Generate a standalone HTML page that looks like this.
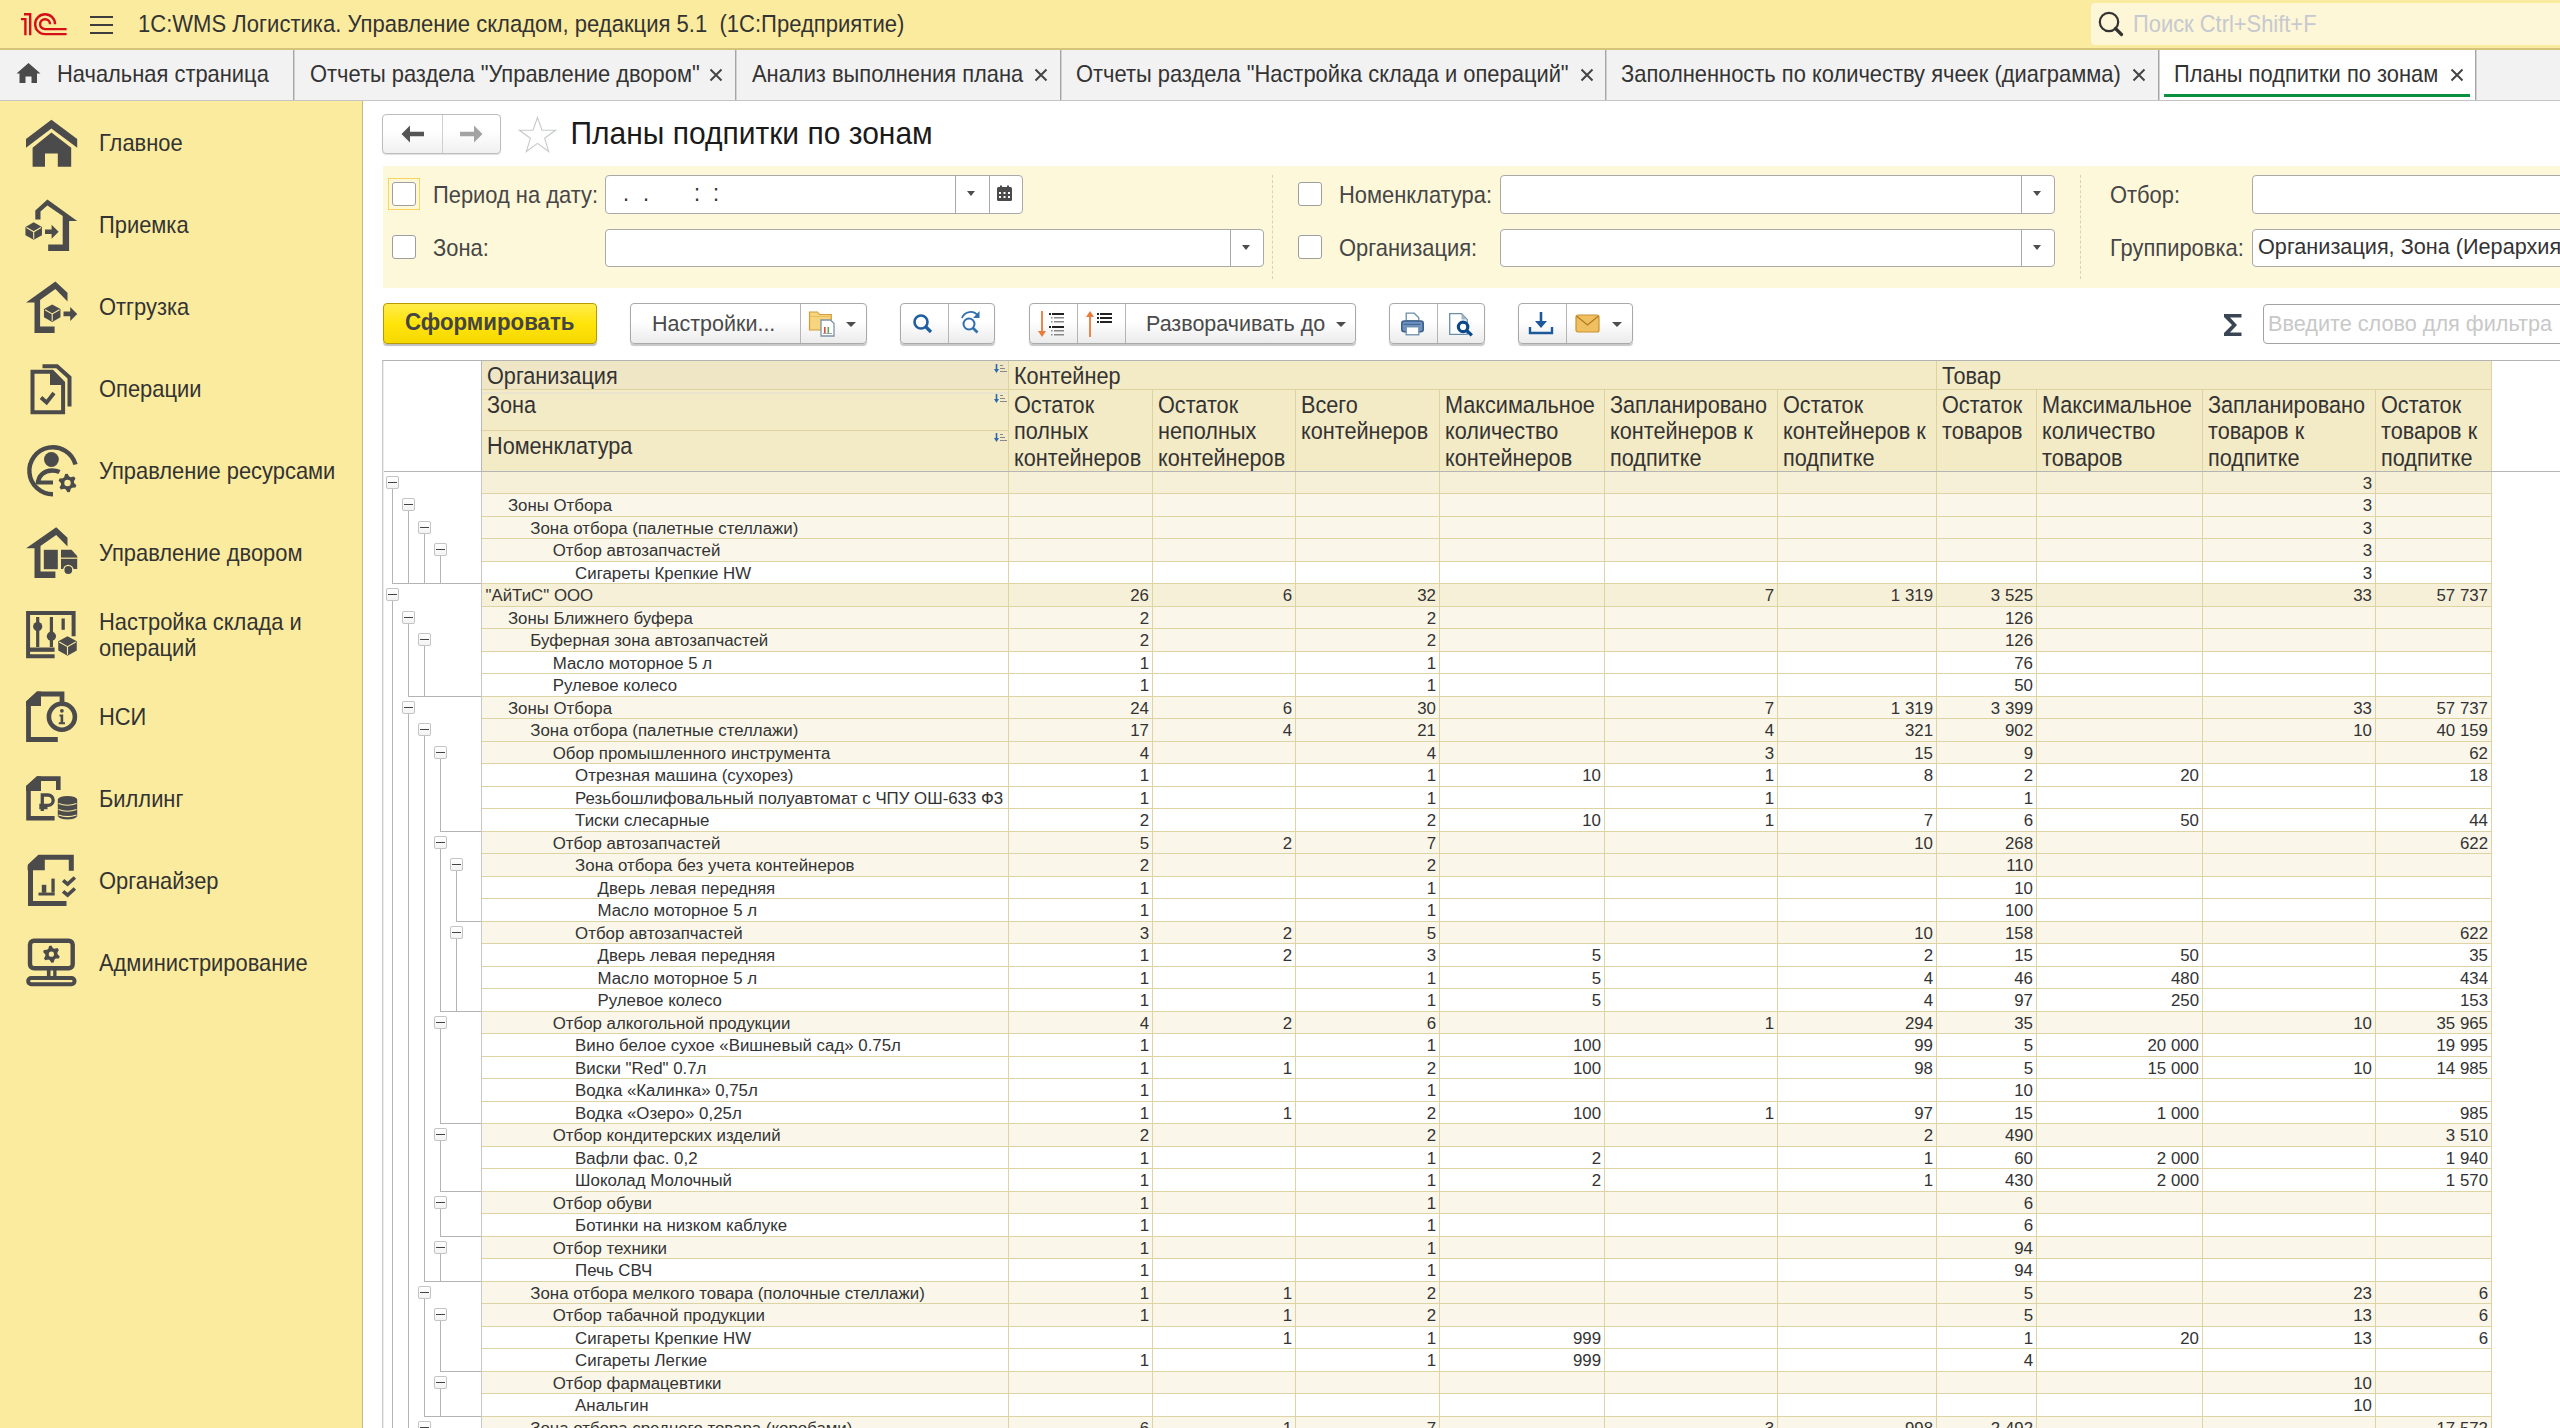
<!DOCTYPE html><html><head><meta charset="utf-8"><style>
*{box-sizing:border-box}
html,body{margin:0;padding:0;width:2560px;height:1428px;overflow:hidden;background:#fff;font-family:"Liberation Sans",sans-serif;color:#333}
.a{position:absolute}
.t{position:absolute;white-space:pre;line-height:1;transform:scaleY(1.05);transform-origin:0 0.8465em}
.t.ht{transform:scaleY(1.065);transform-origin:0 20.66px}
#top{left:0;top:0;width:2560px;height:48px;background:#fbeb9e;border-bottom:0}
#topline{left:0;top:48px;width:2560px;height:2px;background:#d6c37a}
#tabs{left:0;top:50px;width:2560px;height:50px;background:#f2f2f2}
#tabline{left:0;top:100px;width:2560px;height:1px;background:#c4c4c4}
.tsep{position:absolute;top:50px;width:2px;height:50px;background:linear-gradient(to right,#a5a5a5 50%,#d2d2d2 50%)}
.tab{font-size:21.9px;color:#333}
.x{font-size:21px;color:#444}
#side{left:0;top:101px;width:362px;height:1327px;background:#fbeb9e}
#sideline{left:362px;top:101px;width:1px;height:1327px;background:#c8b978}
.st{font-size:21.9px;color:#333}
.ui{font-size:21.9px;color:#464646}
.btn{position:absolute;border:1px solid #a9a9a9;border-radius:4px;background:linear-gradient(#fff,#fff 45%,#ebebeb);box-shadow:0 1.5px 1px rgba(0,0,0,.22)}
.dv{position:absolute;top:0;width:1px;height:100%;background:#b5b5b5}
.fld{position:absolute;border:1px solid #a9a9a9;border-radius:4px;background:#fff}
.cb{position:absolute;width:24px;height:24px;border:1.5px solid #9e9e9e;border-radius:3px;background:#fff}
.dd{position:absolute;width:0;height:0;border-left:4px solid transparent;border-right:4px solid transparent;border-top:5px solid #4d4d4d}
.hd{position:absolute;background:#f3eac6}
.hl{position:absolute;background:#ddd2a0}
.ht{font-size:21.67px;color:#333;line-height:26.3px}
.r{position:absolute;left:481px;width:2010px;height:22.5px}
.c{position:absolute;font-size:16.85px;color:#333;white-space:pre;line-height:1}
.gl{position:absolute;background:#ddd3a3}
.tl{position:absolute;background:#b4b4b4}
.box{position:absolute;width:13px;height:13px;border:1px solid #c4c4c4;border-radius:2px;background:linear-gradient(#fff,#f3f3f3);box-shadow:0 0 0.5px #ddd}
.box:after{content:"";position:absolute;left:1px;top:5px;width:9px;height:1px;background:#444}
</style></head><body><div id="top" class="a"></div><div id="topline" class="a"></div><svg class="a" style="left:0;top:0" width="80" height="48" viewBox="0 0 80 48"><g fill="none" stroke="#d50f1a" stroke-width="2.4">
<path d="M21,19.1 H25.4 V35.2 M24,14.3 H30.2 V35.2"/>
<path d="M55.05,23.6 V24.2 A9.95,9.95 0 1 0 45.1,34.15 H66.6"/>
<path d="M50,23.4 V24.2 A4.95,4.95 0 1 0 45.05,29.15 H66.6"/>
</g></svg><div class="a" style="left:90px;top:16px;width:23px;height:2px;background:#3d3d3d"></div><div class="a" style="left:90px;top:24px;width:23px;height:2px;background:#3d3d3d"></div><div class="a" style="left:90px;top:32px;width:23px;height:2px;background:#3d3d3d"></div><div class="t ui" style="left:138px;top:14px;font-size:22.05px;color:#333">1С:WMS Логистика. Управление складом, редакция 5.1  (1С:Предприятие)</div><div class="a" style="left:2091px;top:3px;width:480px;height:42px;background:#fdf6d7;border-radius:4px"></div><svg class="a" style="left:2097px;top:10px" width="28" height="28" viewBox="0 0 28 28"><circle cx="12" cy="12" r="9.2" fill="none" stroke="#333" stroke-width="2.2"/><path d="M18.5 18.5 L24.5 24.5" stroke="#333" stroke-width="3.2" stroke-linecap="round"/></svg><div class="t " style="left:2133px;top:14px;font-size:21.9px;color:#c6c9cf">Поиск Ctrl+Shift+F</div><div id="tabs" class="a"></div><div class="a" style="left:2159px;top:50px;width:316px;height:50px;background:#fff"></div><div id="tabline" class="a"></div><div class="tsep" style="left:293px"></div><div class="tsep" style="left:735px"></div><div class="tsep" style="left:1060px"></div><div class="tsep" style="left:1605px"></div><div class="tsep" style="left:2158px"></div><div class="tsep" style="left:2475px"></div><div class="a" style="left:2164px;top:94px;width:306px;height:3px;background:#0a913f"></div><svg class="a" style="left:16px;top:63px" width="25" height="21" viewBox="0 0 25 21"><path d="M12.5 0 L24.5 10.5 H21 V20 H15.5 V13.5 H9.5 V20 H3.5 V10.5 H0.5 Z" fill="#4a4a4a"/></svg><div class="t tab" style="left:57px;top:64px;">Начальная страница</div><div class="t tab" style="left:310px;top:64px;">Отчеты раздела &quot;Управление двором&quot;</div><svg class="a" style="left:709px;top:68px" width="14" height="14" viewBox="0 0 14 14"><path d="M1.5 1.5 L12.5 12.5 M12.5 1.5 L1.5 12.5" stroke="#444" stroke-width="2"/></svg><div class="t tab" style="left:752px;top:64px;">Анализ выполнения плана</div><svg class="a" style="left:1034px;top:68px" width="14" height="14" viewBox="0 0 14 14"><path d="M1.5 1.5 L12.5 12.5 M12.5 1.5 L1.5 12.5" stroke="#444" stroke-width="2"/></svg><div class="t tab" style="left:1076px;top:64px;">Отчеты раздела &quot;Настройка склада и операций&quot;</div><svg class="a" style="left:1580px;top:68px" width="14" height="14" viewBox="0 0 14 14"><path d="M1.5 1.5 L12.5 12.5 M12.5 1.5 L1.5 12.5" stroke="#444" stroke-width="2"/></svg><div class="t tab" style="left:1621px;top:64px;">Заполненность по количеству ячеек (диаграмма)</div><svg class="a" style="left:2132px;top:68px" width="14" height="14" viewBox="0 0 14 14"><path d="M1.5 1.5 L12.5 12.5 M12.5 1.5 L1.5 12.5" stroke="#444" stroke-width="2"/></svg><div class="t tab" style="left:2174px;top:64px;">Планы подпитки по зонам</div><svg class="a" style="left:2450px;top:68px" width="14" height="14" viewBox="0 0 14 14"><path d="M1.5 1.5 L12.5 12.5 M12.5 1.5 L1.5 12.5" stroke="#444" stroke-width="2"/></svg><div id="side" class="a"></div><div id="sideline" class="a"></div><div class="t st" style="left:99px;top:133px;">Главное</div><div class="t st" style="left:99px;top:215px;">Приемка</div><div class="t st" style="left:99px;top:297px;">Отгрузка</div><div class="t st" style="left:99px;top:379px;">Операции</div><div class="t st" style="left:99px;top:461px;">Управление ресурсами</div><div class="t st" style="left:99px;top:543px;">Управление двором</div><div class="t st" style="left:99px;top:612px;">Настройка склада и</div><div class="t st" style="left:99px;top:637.5px;">операций</div><div class="t st" style="left:99px;top:707px;">НСИ</div><div class="t st" style="left:99px;top:789px;">Биллинг</div><div class="t st" style="left:99px;top:871px;">Органайзер</div><div class="t st" style="left:99px;top:953px;">Администрирование</div><svg class="a" style="left:0;top:0" width="362" height="1000" viewBox="0 0 362 1000"><path d="M26,139 L51.4,119.7 L77.2,139 V147.8 L51.4,128.5 L26,147.8 Z" fill="#4b4b4b"/><path d="M32.6,147.8 L51.4,132.5 L71.2,147.8 V166.7 H57.8 V153.5 H45 V166.7 H32.6 Z" fill="#4b4b4b"/><path d="M35.3,219.5 V210.6 L47.4,199.4 L77.2,221 H69.1 V250.9 H48.2 V244.5 H62.7 V216 L47.4,205.5 L40.5,211.5 V219.5 Z" fill="#4b4b4b"/><path d="M25.450000000000003,226.98 L33.7,222.35999999999999 L41.95,226.98 V235.23 L33.7,239.85 L25.450000000000003,235.23 Z" fill="#4b4b4b"/><path d="M26.450000000000003,227.57999999999998 L33.7,231.79999999999998 L40.95,227.57999999999998 M33.7,231.79999999999998 V238.85" stroke="#fbeb9e" stroke-width="1.1" fill="none"/><path d="M45,229.5 H51.6 V224.8 L58.6,231.8 L51.6,238.8 V234.10000000000002 H45 Z" fill="#4b4b4b"/><path d="M26.1,302.4 L55.4,281.5 L67.5,292.8 V301.6 L55.4,289 L40.1,300 V326.6 H54.6 V333 H34.5 V302.4 Z" fill="#4b4b4b"/><path d="M43.95,309.08 L52.2,304.46 L60.45,309.08 V317.33 L52.2,321.95 L43.95,317.33 Z" fill="#4b4b4b"/><path d="M44.95,309.68 L52.2,313.9 L59.45,309.68 M52.2,313.9 V320.95" stroke="#fbeb9e" stroke-width="1.1" fill="none"/><path d="M63.5,311.59999999999997 H70.2 V306.9 L77.2,313.9 L70.2,320.9 V316.2 H63.5 Z" fill="#4b4b4b"/><path d="M32.5,371.8 H52 L63.1,383 V412.3 H32.5 Z" fill="none" stroke="#4b4b4b" stroke-width="4"/><path d="M50,370 H53 L65,382 V385 H50 Z" fill="#4b4b4b"/><path d="M41,397.5 L46.6,402.5 L54,393" fill="none" stroke="#4b4b4b" stroke-width="3.8"/><path d="M42.5,366.3 H57 L69.5,377.5 V406.5" fill="none" stroke="#4b4b4b" stroke-width="4"/><path d="M75.5,464.5 A23.5 23.5 0 1 0 53,494.3" fill="none" stroke="#4b4b4b" stroke-width="4.4"/><circle cx="51.4" cy="459.5" r="7.4" fill="#4b4b4b"/><path d="M38,484 C38,475 45,470.5 52,470.5 C55.5,470.5 57.5,471 59.5,472" fill="none" stroke="#4b4b4b" stroke-width="4.6"/><path d="M36.5,482.5 H53" stroke="#4b4b4b" stroke-width="4"/><path d="M76.39,485.37 L75.48,487.59 L72.19,487.68 L70.82,488.73 L69.90,491.88 L67.52,492.20 L65.80,489.40 L64.20,488.74 L61.01,489.52 L59.54,487.61 L61.10,484.73 L60.88,483.01 L58.61,480.63 L59.52,478.41 L62.81,478.32 L64.18,477.27 L65.10,474.12 L67.48,473.80 L69.20,476.60 L70.80,477.26 L73.99,476.48 L75.46,478.39 L73.90,481.27 L74.12,482.99 Z" fill="#4b4b4b"/><circle cx="67.5" cy="483" r="3.2" fill="#fbeb9e"/><path d="M26.1,548.2 L56.2,527.3 L67.5,537.8 V546.6 L56.2,535 L40.5,546 V571.5 H55.4 V578 H34.5 V548.2 Z" fill="#4b4b4b"/><rect x="43.8" y="549.8" width="14" height="19.4" fill="#4b4b4b"/><path d="M61,549.8 H71.5 L77.2,556 V569 H61 Z" fill="#4b4b4b"/><path d="M61,558.2 H77.2" stroke="#fbeb9e" stroke-width="1.2"/><circle cx="68.3" cy="570" r="4.6" fill="#4b4b4b" stroke="#fbeb9e" stroke-width="1.4"/><path d="M54.6,656.3 H28.1 V613 H73.6 V636.2" fill="none" stroke="#4b4b4b" stroke-width="4"/><rect x="30" y="647.5" width="24.6" height="4.3" fill="#4b4b4b"/><rect x="36.1" y="617" width="3.2" height="30" fill="#4b4b4b"/><circle cx="37.7" cy="626.6" r="4.6" fill="#4b4b4b"/><rect x="49.8" y="617" width="3.2" height="30" fill="#4b4b4b"/><circle cx="51.4" cy="636.2" r="4.6" fill="#4b4b4b"/><rect x="61.5" y="618.5" width="3.3" height="11.3" fill="#4b4b4b"/><path d="M58.25,641.32 L67.5,636.14 L76.75,641.32 V650.57 L67.5,655.75 L58.25,650.57 Z" fill="#4b4b4b"/><path d="M59.25,641.9200000000001 L67.5,646.7 L75.75,641.9200000000001 M67.5,646.7 V654.75" stroke="#fbeb9e" stroke-width="1.1" fill="none"/><path d="M62,704 V694 H38 L28.5,702.5 V739.5 H57.8" fill="none" stroke="#4b4b4b" stroke-width="4.8"/><path d="M26.1,701.5 L36.9,691.5 H41 V706 H26.1 Z" fill="#4b4b4b"/><circle cx="61.9" cy="716.7" r="13" fill="#fbeb9e" stroke="#4b4b4b" stroke-width="4.6"/><circle cx="61.9" cy="710.8" r="1.9" fill="#4b4b4b"/><path d="M59.5,714.6 H63.2 V722.3 H65 V724.2 H58.8 V722.3 H60.6 V716.4 H59.5 Z" fill="#4b4b4b"/><path d="M58.3,790 V778.6 H38 L28.5,787 V818.3 H54.6" fill="none" stroke="#4b4b4b" stroke-width="4.6"/><path d="M26.1,786 L36.9,776.3 H41 V791 H26.1 Z" fill="#4b4b4b"/><path d="M42.3,811 V795 H48 A5.2 5.2 0 0 1 48,805.4 H39.3 M39.3,807.5 H47.5" fill="none" stroke="#4b4b4b" stroke-width="3.3"/><ellipse cx="67.5" cy="799.5" rx="9.7" ry="3.6" fill="#4b4b4b" stroke="#fbeb9e" stroke-width="0"/><ellipse cx="67.5" cy="805.5" rx="9.7" ry="3.6" fill="#4b4b4b" stroke="#fbeb9e" stroke-width="1.1"/><ellipse cx="67.5" cy="811.5" rx="9.7" ry="3.6" fill="#4b4b4b" stroke="#fbeb9e" stroke-width="1.1"/><ellipse cx="67.5" cy="816.5" rx="9.7" ry="3.6" fill="#4b4b4b" stroke="#fbeb9e" stroke-width="1.1"/><rect x="57.8" y="799.5" width="19.4" height="17" fill="#4b4b4b"/><path d="M58.5,803.6 Q67.5,806.8000000000001 76.5,803.6" stroke="#fbeb9e" stroke-width="1.1" fill="none"/><path d="M58.5,809.6 Q67.5,812.8000000000001 76.5,809.6" stroke="#fbeb9e" stroke-width="1.1" fill="none"/><path d="M58.5,815 Q67.5,818.2 76.5,815" stroke="#fbeb9e" stroke-width="1.1" fill="none"/><path d="M71.3,870.8 V857.3 H39.5 L30.5,865.5 V903.5 H66.5" fill="none" stroke="#4b4b4b" stroke-width="5"/><path d="M27.6,865.5 L38.5,855.1 H44.8 V870.2 H27.6 Z" fill="#4b4b4b"/><rect x="38.5" y="892.6" width="16.2" height="2.9" fill="#4b4b4b"/><rect x="41.8" y="884.8" width="4.5" height="8" fill="#4b4b4b"/><rect x="51.4" y="878.6" width="3.3" height="14" fill="#4b4b4b"/><path d="M63.1,880.3 L67.6,884.2 L74.9,877.5 M63.1,891.3 L67.6,895.2 L74.9,888.5" fill="none" stroke="#4b4b4b" stroke-width="3.6"/><rect x="30" y="940.7" width="42.7" height="27.6" rx="4" fill="none" stroke="#4b4b4b" stroke-width="4.4"/><path d="M59.71,956.41 L58.86,958.49 L55.79,958.57 L54.51,959.56 L53.64,962.50 L51.42,962.80 L49.81,960.18 L48.31,959.57 L45.33,960.29 L43.96,958.51 L45.42,955.81 L45.21,954.21 L43.09,951.99 L43.94,949.91 L47.01,949.83 L48.29,948.84 L49.16,945.90 L51.38,945.60 L52.99,948.22 L54.49,948.83 L57.47,948.11 L58.84,949.89 L57.38,952.59 L57.59,954.19 Z" fill="#4b4b4b"/><circle cx="51.4" cy="954.2" r="2.6" fill="#fbeb9e"/><rect x="46.9" y="969" width="3.6" height="8" fill="#4b4b4b"/><rect x="53.2" y="969" width="3.3" height="8" fill="#4b4b4b"/><rect x="28.2" y="978" width="46.3" height="6.2" rx="3" fill="none" stroke="#4b4b4b" stroke-width="4"/></svg><div class="btn" style="left:382px;top:114px;width:119px;height:40px;border-color:#bdbdbd;background:linear-gradient(#fff,#fff 40%,#f0f0f0);box-shadow:0 1px 1px rgba(0,0,0,.12)"><div class="dv" style="left:59px;background:#cfcfcf"></div></div><svg class="a" style="left:401px;top:125px" width="24" height="18" viewBox="0 0 24 18"><path d="M0.5 9 L9 0.5 V6.8 H23 V11.2 H9 V17.5 Z" fill="#555"/></svg><svg class="a" style="left:459px;top:125px" width="24" height="18" viewBox="0 0 24 18"><path d="M23.5 9 L15 0.5 V6.8 H1 V11.2 H15 V17.5 Z" fill="#a3a3a3"/></svg><svg class="a" style="left:518px;top:116px" width="39" height="37" viewBox="0 0 39 37"><path d="M19.5 1.5 L24 14.3 H37.5 L26.6 22.3 L30.7 35.5 L19.5 27.4 L8.3 35.5 L12.4 22.3 L1.5 14.3 H15 Z" fill="none" stroke="#c6c9cc" stroke-width="1.1" stroke-linejoin="miter"/></svg><div class="t " style="left:570.5px;top:119px;font-size:30px;color:#1a1a1a">Планы подпитки по зонам</div><div class="a" style="left:383px;top:166px;width:2177px;height:122px;background:#fef8da"></div><div class="a" style="left:388px;top:178px;width:32px;height:32px;border:1px solid #f8d45c"></div><div class="cb" style="left:392px;top:182px"></div><div class="cb" style="left:392px;top:235px"></div><div class="t ui" style="left:433px;top:185px;">Период на дату:</div><div class="t ui" style="left:433px;top:238px;">Зона:</div><div class="fld" style="left:605px;top:175px;width:418px;height:39px"><div class="dv" style="left:349px;background:#a9a9a9"></div><div class="dv" style="left:383px;background:#a9a9a9"></div></div><div class="t " style="left:623px;top:183px;font-size:21.9px;color:#333">.</div><div class="t " style="left:643px;top:183px;font-size:21.9px;color:#333">.</div><div class="t " style="left:694px;top:183px;font-size:21.9px;color:#333">:</div><div class="t " style="left:713px;top:183px;font-size:21.9px;color:#333">:</div><div class="dd" style="left:967px;top:191px"></div><svg class="a" style="left:995px;top:184px" width="20" height="20" viewBox="0 0 20 20"><rect x="2" y="3" width="15" height="14" rx="1.5" fill="#4a4a4a"/><rect x="5" y="1.5" width="2" height="4" fill="#4a4a4a"/><rect x="12" y="1.5" width="2" height="4" fill="#4a4a4a"/><g fill="#fff"><rect x="4" y="8" width="2" height="2"/><rect x="8.5" y="8" width="2" height="2"/><rect x="13" y="8" width="2" height="2"/><rect x="4" y="12" width="2" height="2"/><rect x="8.5" y="12" width="2" height="2"/><rect x="13" y="12" width="2" height="2"/></g></svg><div class="fld" style="left:605px;top:229px;width:659px;height:38px"><div class="dv" style="left:624px;background:#a9a9a9"></div></div><div class="dd" style="left:1242px;top:245px"></div><div class="a" style="left:1272px;top:175px;width:0;height:104px;border-left:1px dashed #d8d2b8"></div><div class="cb" style="left:1298px;top:182px"></div><div class="cb" style="left:1298px;top:235px"></div><div class="t ui" style="left:1339px;top:185px;">Номенклатура:</div><div class="t ui" style="left:1339px;top:238px;">Организация:</div><div class="fld" style="left:1500px;top:175px;width:555px;height:39px"><div class="dv" style="left:520px;background:#a9a9a9"></div></div><div class="dd" style="left:2033px;top:191px"></div><div class="fld" style="left:1500px;top:229px;width:555px;height:38px"><div class="dv" style="left:520px;background:#a9a9a9"></div></div><div class="dd" style="left:2033px;top:245px"></div><div class="a" style="left:2080px;top:175px;width:0;height:104px;border-left:1px dashed #d8d2b8"></div><div class="t ui" style="left:2110px;top:185px;">Отбор:</div><div class="t ui" style="left:2110px;top:238px;">Группировка:</div><div class="fld" style="left:2252px;top:175px;width:400px;height:39px"></div><div class="fld" style="left:2252px;top:229px;width:400px;height:38px"></div><div class="t " style="left:2258px;top:236px;font-size:21.67px;color:#333">Организация, Зона (Иерархия), Номенклатура</div><div class="a" style="left:383px;top:303px;width:214px;height:41px;border:1px solid #b59b00;border-radius:4px;background:linear-gradient(#ffec4a,#ffe40a 50%,#f5d800);box-shadow:0 1.5px 1px rgba(0,0,0,.25)"></div><div class="t " style="left:405px;top:312px;font-size:22.25px;font-weight:bold;color:#444">Сформировать</div><div class="btn" style="left:630px;top:303px;width:237px;height:41px"><div class="dv" style="left:169px"></div></div><div class="t ui" style="left:652px;top:314px;font-size:21.5px;color:#4a4a4a">Настройки...</div><svg class="a" style="left:808px;top:310px" width="30" height="28" viewBox="0 0 30 28"><path d="M1.5,4.5 V2 H9.5 L11.5,4.5 H23.3 V20 H1.5 Z" fill="#f6d57e" stroke="#d49b3c" stroke-width="1.2"/><path d="M1.5,6.5 H23.3" stroke="#e8bd5c" stroke-width="1"/><path d="M13,10 H22.5 L26,13.5 V26 H13 Z" fill="#fff" stroke="#7f93a6" stroke-width="1.3"/><rect x="16" y="17" width="1.6" height="6" fill="#e0463a"/><rect x="19.5" y="17" width="1.6" height="6" fill="#58a85a"/><rect x="15" y="23" width="9" height="1" fill="#9aa"/></svg><div class="dd" style="left:846px;top:322px;border-left-width:5px;border-right-width:5px;border-top-width:5px"></div><div class="btn" style="left:900px;top:303px;width:95px;height:41px"><div class="dv" style="left:47px"></div></div><svg class="a" style="left:911px;top:312px" width="24" height="24" viewBox="0 0 24 24"><circle cx="10" cy="10" r="6.5" fill="none" stroke="#1f5f9f" stroke-width="2.6"/><path d="M14.5 14.5 L20 20" stroke="#1f5f9f" stroke-width="3.2"/></svg><svg class="a" style="left:958px;top:308px" width="26" height="28" viewBox="0 0 26 28"><circle cx="11" cy="16" r="5.5" fill="none" stroke="#2f6faf" stroke-width="2"/><path d="M15 20 L19.5 24.5" stroke="#2f6faf" stroke-width="2.6"/><path d="M4 10 A9 9 0 0 1 20 8" fill="none" stroke="#2f6faf" stroke-width="1.8"/><path d="M21.5 3 V10 H15 Z" fill="#2f6faf"/></svg><div class="btn" style="left:1029px;top:303px;width:327px;height:41px"><div class="dv" style="left:47px"></div><div class="dv" style="left:95px"></div></div><svg class="a" style="left:1037px;top:310px" width="30" height="30" viewBox="0 0 30 30"><path d="M5 1 V25" stroke="#ea7a3a" stroke-width="1.8"/><path d="M1 21 L5 27 L9 21 Z" fill="#ea7a3a"/><g fill="#222"><rect x="12" y="3" width="2" height="2"/><rect x="15" y="3" width="12" height="2"/><rect x="12" y="16" width="2" height="2"/><rect x="15" y="16" width="12" height="2"/></g><g fill="#888"><rect x="14" y="7" width="1.5" height="1.5"/><rect x="17" y="7" width="10" height="1.5"/><rect x="14" y="11" width="1.5" height="1.5"/><rect x="17" y="11" width="10" height="1.5"/><rect x="14" y="20" width="1.5" height="1.5"/><rect x="17" y="20" width="10" height="1.5"/><rect x="14" y="24" width="1.5" height="1.5"/><rect x="17" y="24" width="10" height="1.5"/></g></svg><svg class="a" style="left:1085px;top:310px" width="30" height="30" viewBox="0 0 30 30"><path d="M5 27 V4" stroke="#ea7a3a" stroke-width="1.8"/><path d="M1 7 L5 1 L9 7 Z" fill="#ea7a3a"/><g fill="#222"><rect x="12" y="3" width="2" height="2"/><rect x="15" y="3" width="12" height="2"/><rect x="12" y="7" width="2" height="2"/><rect x="15" y="7" width="12" height="2"/><rect x="12" y="11" width="2" height="2"/><rect x="15" y="11" width="12" height="2"/></g></svg><div class="t ui" style="left:1146px;top:314px;font-size:21.5px;color:#4a4a4a">Разворачивать до</div><div class="dd" style="left:1336px;top:322px;border-left-width:5px;border-right-width:5px;border-top-width:5px"></div><div class="btn" style="left:1389px;top:303px;width:96px;height:41px"><div class="dv" style="left:47px"></div></div><svg class="a" style="left:1399px;top:311px" width="26" height="26" viewBox="0 0 26 26"><path d="M7.2 2.2 H15.2 L19.8 6.7 V10 H7.2 Z" fill="#fff" stroke="#6b8eaa" stroke-width="1.3"/><rect x="2.8" y="10" width="21.4" height="10.8" rx="2.5" fill="#6d92c3" stroke="#3e5f86" stroke-width="1.6"/><path d="M4.6 13.3 H21.6" stroke="#3e5f86" stroke-width="1"/><rect x="7.2" y="15.8" width="12.6" height="8" fill="#fff" stroke="#6b8eaa" stroke-width="1.3"/></svg><svg class="a" style="left:1448px;top:310px" width="28" height="28" viewBox="0 0 28 28"><path d="M1.7 3.7 H13.5 L19.2 9.4 V24.3 H1.7 Z" fill="#fff" stroke="#6a8fab" stroke-width="1.3"/><path d="M13.5 3.7 V9.4 H19.2" fill="#9fb4c4"/><circle cx="15.1" cy="16.9" r="4.7" fill="#fff" stroke="#0b4a88" stroke-width="3.2"/><path d="M18.3 20.1 L23.8 25.4" stroke="#0b4a88" stroke-width="3.4"/></svg><div class="btn" style="left:1518px;top:303px;width:115px;height:41px"><div class="dv" style="left:47px"></div></div><svg class="a" style="left:1528px;top:311px" width="26" height="26" viewBox="0 0 26 26"><path d="M13 1 V15" stroke="#1a5a9a" stroke-width="2.6"/><path d="M7 10 L13 17 L19 10 Z" fill="#1a5a9a"/><path d="M2 16 V22 H24 V16" fill="none" stroke="#1a5a9a" stroke-width="2.4"/></svg><svg class="a" style="left:1575px;top:314px" width="26" height="20" viewBox="0 0 26 20"><rect x="1" y="1" width="23" height="17" rx="2" fill="#f0c060" stroke="#c99030" stroke-width="1.2"/><path d="M1.5 2 L12.5 11 L23.5 2" fill="none" stroke="#b07a20" stroke-width="1.3"/></svg><div class="dd" style="left:1612px;top:322px;border-left-width:5px;border-right-width:5px;border-top-width:5px"></div><svg class="a" style="left:2223px;top:313px" width="20" height="24" viewBox="0 0 20 24"><path d="M1 1 H18.5 V4.5 H7 L14 12 L7 19.5 H18.5 V23 H1 V20 L9 12 L1 4 Z" fill="#3a4656"/></svg><div class="fld" style="left:2263px;top:304px;width:400px;height:40px;border-color:#a3a3a3"></div><div class="t " style="left:2268px;top:313px;font-size:21.67px;color:#c8c8c8">Введите слово для фильтра</div><div class="a" style="left:382px;top:360px;width:2178px;height:1px;background:#b3b3b3"></div><div class="hd" style="left:481px;top:361px;width:527.4px;height:28.5px;background:#efe6c6"></div><div class="hd" style="left:1008.4px;top:361px;width:1482.85px;height:110.5px"></div><div class="hd" style="left:481px;top:389.5px;width:527.4px;height:82px"></div><div class="hl" style="left:481px;top:389px;width:2010.25px;height:1px"></div><div class="hl" style="left:481px;top:430px;width:527.4px;height:1px"></div><div class="a" style="left:482px;top:392px;width:526px;height:2px;background:#ebe5cf"></div><div class="hl" style="left:1008px;top:361px;width:1px;height:110.5px"></div><div class="hl" style="left:1152px;top:389.5px;width:1px;height:82px"></div><div class="hl" style="left:1295px;top:389.5px;width:1px;height:82px"></div><div class="hl" style="left:1439px;top:389.5px;width:1px;height:82px"></div><div class="hl" style="left:1604px;top:389.5px;width:1px;height:82px"></div><div class="hl" style="left:1777px;top:389.5px;width:1px;height:82px"></div><div class="hl" style="left:1936px;top:361px;width:1px;height:110.5px"></div><div class="hl" style="left:2036px;top:389.5px;width:1px;height:82px"></div><div class="hl" style="left:2202px;top:389.5px;width:1px;height:82px"></div><div class="hl" style="left:2375px;top:389.5px;width:1px;height:82px"></div><div class="hl" style="left:2491px;top:361px;width:1px;height:110.5px"></div><div class="a" style="left:481px;top:361px;width:1px;height:110.5px;background:#b8b8b8"></div><div class="a" style="left:383px;top:471px;width:2177px;height:1px;background:#b5b5b5"></div><div class="a" style="left:382px;top:360px;width:1px;height:1068px;background:#c9c9c9"></div><div class="a" style="left:383px;top:361px;width:1px;height:1067px;background:#ededed"></div><div class="t ht" style="left:487px;top:364px;">Организация</div><div class="t ht" style="left:487px;top:393px;">Зона</div><div class="t ht" style="left:487px;top:434px;">Номенклатура</div><div class="t ht" style="left:1014px;top:364px;">Контейнер</div><div class="t ht" style="left:1942px;top:364px;">Товар</div><div class="t ht" style="left:1014px;top:393.00px">Остаток</div><div class="t ht" style="left:1014px;top:419.30px">полных</div><div class="t ht" style="left:1014px;top:445.60px">контейнеров</div><div class="t ht" style="left:1158px;top:393.00px">Остаток</div><div class="t ht" style="left:1158px;top:419.30px">неполных</div><div class="t ht" style="left:1158px;top:445.60px">контейнеров</div><div class="t ht" style="left:1301px;top:393.00px">Всего</div><div class="t ht" style="left:1301px;top:419.30px">контейнеров</div><div class="t ht" style="left:1445px;top:393.00px">Максимальное</div><div class="t ht" style="left:1445px;top:419.30px">количество</div><div class="t ht" style="left:1445px;top:445.60px">контейнеров</div><div class="t ht" style="left:1610px;top:393.00px">Запланировано</div><div class="t ht" style="left:1610px;top:419.30px">контейнеров к</div><div class="t ht" style="left:1610px;top:445.60px">подпитке</div><div class="t ht" style="left:1783px;top:393.00px">Остаток</div><div class="t ht" style="left:1783px;top:419.30px">контейнеров к</div><div class="t ht" style="left:1783px;top:445.60px">подпитке</div><div class="t ht" style="left:1942px;top:393.00px">Остаток</div><div class="t ht" style="left:1942px;top:419.30px">товаров</div><div class="t ht" style="left:2042px;top:393.00px">Максимальное</div><div class="t ht" style="left:2042px;top:419.30px">количество</div><div class="t ht" style="left:2042px;top:445.60px">товаров</div><div class="t ht" style="left:2208px;top:393.00px">Запланировано</div><div class="t ht" style="left:2208px;top:419.30px">товаров к</div><div class="t ht" style="left:2208px;top:445.60px">подпитке</div><div class="t ht" style="left:2381px;top:393.00px">Остаток</div><div class="t ht" style="left:2381px;top:419.30px">товаров к</div><div class="t ht" style="left:2381px;top:445.60px">подпитке</div><svg class="a" style="left:994px;top:364px" width="13" height="10" viewBox="0 0 13 10"><path d="M2.5 0 V7" stroke="#2a6ab0" stroke-width="1.6"/><path d="M0 5 L2.5 9 L5 5Z" fill="#2a6ab0"/><g fill="#888"><rect x="6" y="1" width="3" height="1"/><rect x="6" y="4" width="5" height="1"/><rect x="6" y="7" width="7" height="1"/></g></svg><svg class="a" style="left:994px;top:394px" width="13" height="10" viewBox="0 0 13 10"><path d="M2.5 0 V7" stroke="#2a6ab0" stroke-width="1.6"/><path d="M0 5 L2.5 9 L5 5Z" fill="#2a6ab0"/><g fill="#888"><rect x="6" y="1" width="3" height="1"/><rect x="6" y="4" width="5" height="1"/><rect x="6" y="7" width="7" height="1"/></g></svg><svg class="a" style="left:994px;top:433px" width="13" height="10" viewBox="0 0 13 10"><path d="M2.5 0 V7" stroke="#2a6ab0" stroke-width="1.6"/><path d="M0 5 L2.5 9 L5 5Z" fill="#2a6ab0"/><g fill="#888"><rect x="6" y="1" width="3" height="1"/><rect x="6" y="4" width="5" height="1"/><rect x="6" y="7" width="7" height="1"/></g></svg><div class="r" style="top:472px;height:21px;background:#f7f0d8"></div><div class="r" style="top:494px;height:22px;background:#faf7ea"></div><div class="r" style="top:517px;height:21px;background:#faf7ea"></div><div class="r" style="top:539px;height:22px;background:#faf7ea"></div><div class="r" style="top:562px;height:21px;background:#ffffff"></div><div class="r" style="top:584px;height:22px;background:#f7f0d8"></div><div class="r" style="top:607px;height:21px;background:#faf7ea"></div><div class="r" style="top:629px;height:22px;background:#faf7ea"></div><div class="r" style="top:652px;height:21px;background:#ffffff"></div><div class="r" style="top:674px;height:22px;background:#ffffff"></div><div class="r" style="top:697px;height:21px;background:#faf7ea"></div><div class="r" style="top:719px;height:22px;background:#faf7ea"></div><div class="r" style="top:742px;height:21px;background:#faf7ea"></div><div class="r" style="top:764px;height:22px;background:#ffffff"></div><div class="r" style="top:787px;height:21px;background:#ffffff"></div><div class="r" style="top:809px;height:22px;background:#ffffff"></div><div class="r" style="top:832px;height:21px;background:#faf7ea"></div><div class="r" style="top:854px;height:22px;background:#faf7ea"></div><div class="r" style="top:877px;height:21px;background:#ffffff"></div><div class="r" style="top:899px;height:22px;background:#ffffff"></div><div class="r" style="top:922px;height:21px;background:#faf7ea"></div><div class="r" style="top:944px;height:22px;background:#ffffff"></div><div class="r" style="top:967px;height:21px;background:#ffffff"></div><div class="r" style="top:989px;height:22px;background:#ffffff"></div><div class="r" style="top:1012px;height:21px;background:#faf7ea"></div><div class="r" style="top:1034px;height:22px;background:#ffffff"></div><div class="r" style="top:1057px;height:21px;background:#ffffff"></div><div class="r" style="top:1079px;height:22px;background:#ffffff"></div><div class="r" style="top:1102px;height:21px;background:#ffffff"></div><div class="r" style="top:1124px;height:22px;background:#faf7ea"></div><div class="r" style="top:1147px;height:21px;background:#ffffff"></div><div class="r" style="top:1169px;height:22px;background:#ffffff"></div><div class="r" style="top:1192px;height:21px;background:#faf7ea"></div><div class="r" style="top:1214px;height:22px;background:#ffffff"></div><div class="r" style="top:1237px;height:21px;background:#faf7ea"></div><div class="r" style="top:1259px;height:22px;background:#ffffff"></div><div class="r" style="top:1282px;height:21px;background:#faf7ea"></div><div class="r" style="top:1304px;height:22px;background:#faf7ea"></div><div class="r" style="top:1327px;height:21px;background:#ffffff"></div><div class="r" style="top:1349px;height:22px;background:#ffffff"></div><div class="r" style="top:1372px;height:21px;background:#faf7ea"></div><div class="r" style="top:1394px;height:22px;background:#ffffff"></div><div class="r" style="top:1417px;height:21px;background:#faf7ea"></div><div class="gl" style="left:481px;top:493px;width:2011px;height:1px"></div><div class="gl" style="left:481px;top:516px;width:2011px;height:1px"></div><div class="gl" style="left:481px;top:538px;width:2011px;height:1px"></div><div class="gl" style="left:481px;top:561px;width:2011px;height:1px"></div><div class="gl" style="left:481px;top:583px;width:2011px;height:1px"></div><div class="gl" style="left:481px;top:606px;width:2011px;height:1px"></div><div class="gl" style="left:481px;top:628px;width:2011px;height:1px"></div><div class="gl" style="left:481px;top:651px;width:2011px;height:1px"></div><div class="gl" style="left:481px;top:673px;width:2011px;height:1px"></div><div class="gl" style="left:481px;top:696px;width:2011px;height:1px"></div><div class="gl" style="left:481px;top:718px;width:2011px;height:1px"></div><div class="gl" style="left:481px;top:741px;width:2011px;height:1px"></div><div class="gl" style="left:481px;top:763px;width:2011px;height:1px"></div><div class="gl" style="left:481px;top:786px;width:2011px;height:1px"></div><div class="gl" style="left:481px;top:808px;width:2011px;height:1px"></div><div class="gl" style="left:481px;top:831px;width:2011px;height:1px"></div><div class="gl" style="left:481px;top:853px;width:2011px;height:1px"></div><div class="gl" style="left:481px;top:876px;width:2011px;height:1px"></div><div class="gl" style="left:481px;top:898px;width:2011px;height:1px"></div><div class="gl" style="left:481px;top:921px;width:2011px;height:1px"></div><div class="gl" style="left:481px;top:943px;width:2011px;height:1px"></div><div class="gl" style="left:481px;top:966px;width:2011px;height:1px"></div><div class="gl" style="left:481px;top:988px;width:2011px;height:1px"></div><div class="gl" style="left:481px;top:1011px;width:2011px;height:1px"></div><div class="gl" style="left:481px;top:1033px;width:2011px;height:1px"></div><div class="gl" style="left:481px;top:1056px;width:2011px;height:1px"></div><div class="gl" style="left:481px;top:1078px;width:2011px;height:1px"></div><div class="gl" style="left:481px;top:1101px;width:2011px;height:1px"></div><div class="gl" style="left:481px;top:1123px;width:2011px;height:1px"></div><div class="gl" style="left:481px;top:1146px;width:2011px;height:1px"></div><div class="gl" style="left:481px;top:1168px;width:2011px;height:1px"></div><div class="gl" style="left:481px;top:1191px;width:2011px;height:1px"></div><div class="gl" style="left:481px;top:1213px;width:2011px;height:1px"></div><div class="gl" style="left:481px;top:1236px;width:2011px;height:1px"></div><div class="gl" style="left:481px;top:1258px;width:2011px;height:1px"></div><div class="gl" style="left:481px;top:1281px;width:2011px;height:1px"></div><div class="gl" style="left:481px;top:1303px;width:2011px;height:1px"></div><div class="gl" style="left:481px;top:1326px;width:2011px;height:1px"></div><div class="gl" style="left:481px;top:1348px;width:2011px;height:1px"></div><div class="gl" style="left:481px;top:1371px;width:2011px;height:1px"></div><div class="gl" style="left:481px;top:1393px;width:2011px;height:1px"></div><div class="gl" style="left:481px;top:1416px;width:2011px;height:1px"></div><div class="gl" style="left:481px;top:1438px;width:2011px;height:1px"></div><div class="gl" style="left:1008px;top:472px;width:1px;height:956px"></div><div class="gl" style="left:1152px;top:472px;width:1px;height:956px"></div><div class="gl" style="left:1295px;top:472px;width:1px;height:956px"></div><div class="gl" style="left:1439px;top:472px;width:1px;height:956px"></div><div class="gl" style="left:1604px;top:472px;width:1px;height:956px"></div><div class="gl" style="left:1777px;top:472px;width:1px;height:956px"></div><div class="gl" style="left:1936px;top:472px;width:1px;height:956px"></div><div class="gl" style="left:2036px;top:472px;width:1px;height:956px"></div><div class="gl" style="left:2202px;top:472px;width:1px;height:956px"></div><div class="gl" style="left:2375px;top:472px;width:1px;height:956px"></div><div class="gl" style="left:2491px;top:472px;width:1px;height:956px"></div><div class="gl" style="left:481px;top:472px;width:1px;height:956px;background:#c8c8c8"></div><div class="c" style="left:2202px;width:170px;text-align:right;top:476px">3</div><div class="c" style="left:507.9px;top:498px">Зоны Отбора</div><div class="c" style="left:2202px;width:170px;text-align:right;top:498px">3</div><div class="c" style="left:530.3px;top:521px">Зона отбора (палетные стеллажи)</div><div class="c" style="left:2202px;width:170px;text-align:right;top:521px">3</div><div class="c" style="left:552.7px;top:543px">Отбор автозапчастей</div><div class="c" style="left:2202px;width:170px;text-align:right;top:543px">3</div><div class="c" style="left:575.1px;top:566px">Сигареты Крепкие HW</div><div class="c" style="left:2202px;width:170px;text-align:right;top:566px">3</div><div class="c" style="left:485.5px;top:588px">&quot;АйТиС&quot; ООО</div><div class="c" style="left:1008px;width:141px;text-align:right;top:588px">26</div><div class="c" style="left:1152px;width:140px;text-align:right;top:588px">6</div><div class="c" style="left:1295px;width:141px;text-align:right;top:588px">32</div><div class="c" style="left:1604px;width:170px;text-align:right;top:588px">7</div><div class="c" style="left:1777px;width:156px;text-align:right;top:588px">1 319</div><div class="c" style="left:1936px;width:97px;text-align:right;top:588px">3 525</div><div class="c" style="left:2202px;width:170px;text-align:right;top:588px">33</div><div class="c" style="left:2375px;width:113px;text-align:right;top:588px">57 737</div><div class="c" style="left:507.9px;top:611px">Зоны Ближнего буфера</div><div class="c" style="left:1008px;width:141px;text-align:right;top:611px">2</div><div class="c" style="left:1295px;width:141px;text-align:right;top:611px">2</div><div class="c" style="left:1936px;width:97px;text-align:right;top:611px">126</div><div class="c" style="left:530.3px;top:633px">Буферная зона автозапчастей</div><div class="c" style="left:1008px;width:141px;text-align:right;top:633px">2</div><div class="c" style="left:1295px;width:141px;text-align:right;top:633px">2</div><div class="c" style="left:1936px;width:97px;text-align:right;top:633px">126</div><div class="c" style="left:552.7px;top:656px">Масло моторное 5 л</div><div class="c" style="left:1008px;width:141px;text-align:right;top:656px">1</div><div class="c" style="left:1295px;width:141px;text-align:right;top:656px">1</div><div class="c" style="left:1936px;width:97px;text-align:right;top:656px">76</div><div class="c" style="left:552.7px;top:678px">Рулевое колесо</div><div class="c" style="left:1008px;width:141px;text-align:right;top:678px">1</div><div class="c" style="left:1295px;width:141px;text-align:right;top:678px">1</div><div class="c" style="left:1936px;width:97px;text-align:right;top:678px">50</div><div class="c" style="left:507.9px;top:701px">Зоны Отбора</div><div class="c" style="left:1008px;width:141px;text-align:right;top:701px">24</div><div class="c" style="left:1152px;width:140px;text-align:right;top:701px">6</div><div class="c" style="left:1295px;width:141px;text-align:right;top:701px">30</div><div class="c" style="left:1604px;width:170px;text-align:right;top:701px">7</div><div class="c" style="left:1777px;width:156px;text-align:right;top:701px">1 319</div><div class="c" style="left:1936px;width:97px;text-align:right;top:701px">3 399</div><div class="c" style="left:2202px;width:170px;text-align:right;top:701px">33</div><div class="c" style="left:2375px;width:113px;text-align:right;top:701px">57 737</div><div class="c" style="left:530.3px;top:723px">Зона отбора (палетные стеллажи)</div><div class="c" style="left:1008px;width:141px;text-align:right;top:723px">17</div><div class="c" style="left:1152px;width:140px;text-align:right;top:723px">4</div><div class="c" style="left:1295px;width:141px;text-align:right;top:723px">21</div><div class="c" style="left:1604px;width:170px;text-align:right;top:723px">4</div><div class="c" style="left:1777px;width:156px;text-align:right;top:723px">321</div><div class="c" style="left:1936px;width:97px;text-align:right;top:723px">902</div><div class="c" style="left:2202px;width:170px;text-align:right;top:723px">10</div><div class="c" style="left:2375px;width:113px;text-align:right;top:723px">40 159</div><div class="c" style="left:552.7px;top:746px">Обор промышленного инструмента</div><div class="c" style="left:1008px;width:141px;text-align:right;top:746px">4</div><div class="c" style="left:1295px;width:141px;text-align:right;top:746px">4</div><div class="c" style="left:1604px;width:170px;text-align:right;top:746px">3</div><div class="c" style="left:1777px;width:156px;text-align:right;top:746px">15</div><div class="c" style="left:1936px;width:97px;text-align:right;top:746px">9</div><div class="c" style="left:2375px;width:113px;text-align:right;top:746px">62</div><div class="c" style="left:575.1px;top:768px">Отрезная машина (сухорез)</div><div class="c" style="left:1008px;width:141px;text-align:right;top:768px">1</div><div class="c" style="left:1295px;width:141px;text-align:right;top:768px">1</div><div class="c" style="left:1439px;width:162px;text-align:right;top:768px">10</div><div class="c" style="left:1604px;width:170px;text-align:right;top:768px">1</div><div class="c" style="left:1777px;width:156px;text-align:right;top:768px">8</div><div class="c" style="left:1936px;width:97px;text-align:right;top:768px">2</div><div class="c" style="left:2036px;width:163px;text-align:right;top:768px">20</div><div class="c" style="left:2375px;width:113px;text-align:right;top:768px">18</div><div class="c" style="left:575.1px;top:791px">Резьбошлифовальный полуавтомат с ЧПУ ОШ-633 Ф3</div><div class="c" style="left:1008px;width:141px;text-align:right;top:791px">1</div><div class="c" style="left:1295px;width:141px;text-align:right;top:791px">1</div><div class="c" style="left:1604px;width:170px;text-align:right;top:791px">1</div><div class="c" style="left:1936px;width:97px;text-align:right;top:791px">1</div><div class="c" style="left:575.1px;top:813px">Тиски слесарные</div><div class="c" style="left:1008px;width:141px;text-align:right;top:813px">2</div><div class="c" style="left:1295px;width:141px;text-align:right;top:813px">2</div><div class="c" style="left:1439px;width:162px;text-align:right;top:813px">10</div><div class="c" style="left:1604px;width:170px;text-align:right;top:813px">1</div><div class="c" style="left:1777px;width:156px;text-align:right;top:813px">7</div><div class="c" style="left:1936px;width:97px;text-align:right;top:813px">6</div><div class="c" style="left:2036px;width:163px;text-align:right;top:813px">50</div><div class="c" style="left:2375px;width:113px;text-align:right;top:813px">44</div><div class="c" style="left:552.7px;top:836px">Отбор автозапчастей</div><div class="c" style="left:1008px;width:141px;text-align:right;top:836px">5</div><div class="c" style="left:1152px;width:140px;text-align:right;top:836px">2</div><div class="c" style="left:1295px;width:141px;text-align:right;top:836px">7</div><div class="c" style="left:1777px;width:156px;text-align:right;top:836px">10</div><div class="c" style="left:1936px;width:97px;text-align:right;top:836px">268</div><div class="c" style="left:2375px;width:113px;text-align:right;top:836px">622</div><div class="c" style="left:575.1px;top:858px">Зона отбора без учета контейнеров</div><div class="c" style="left:1008px;width:141px;text-align:right;top:858px">2</div><div class="c" style="left:1295px;width:141px;text-align:right;top:858px">2</div><div class="c" style="left:1936px;width:97px;text-align:right;top:858px">110</div><div class="c" style="left:597.5px;top:881px">Дверь левая передняя</div><div class="c" style="left:1008px;width:141px;text-align:right;top:881px">1</div><div class="c" style="left:1295px;width:141px;text-align:right;top:881px">1</div><div class="c" style="left:1936px;width:97px;text-align:right;top:881px">10</div><div class="c" style="left:597.5px;top:903px">Масло моторное 5 л</div><div class="c" style="left:1008px;width:141px;text-align:right;top:903px">1</div><div class="c" style="left:1295px;width:141px;text-align:right;top:903px">1</div><div class="c" style="left:1936px;width:97px;text-align:right;top:903px">100</div><div class="c" style="left:575.1px;top:926px">Отбор автозапчастей</div><div class="c" style="left:1008px;width:141px;text-align:right;top:926px">3</div><div class="c" style="left:1152px;width:140px;text-align:right;top:926px">2</div><div class="c" style="left:1295px;width:141px;text-align:right;top:926px">5</div><div class="c" style="left:1777px;width:156px;text-align:right;top:926px">10</div><div class="c" style="left:1936px;width:97px;text-align:right;top:926px">158</div><div class="c" style="left:2375px;width:113px;text-align:right;top:926px">622</div><div class="c" style="left:597.5px;top:948px">Дверь левая передняя</div><div class="c" style="left:1008px;width:141px;text-align:right;top:948px">1</div><div class="c" style="left:1152px;width:140px;text-align:right;top:948px">2</div><div class="c" style="left:1295px;width:141px;text-align:right;top:948px">3</div><div class="c" style="left:1439px;width:162px;text-align:right;top:948px">5</div><div class="c" style="left:1777px;width:156px;text-align:right;top:948px">2</div><div class="c" style="left:1936px;width:97px;text-align:right;top:948px">15</div><div class="c" style="left:2036px;width:163px;text-align:right;top:948px">50</div><div class="c" style="left:2375px;width:113px;text-align:right;top:948px">35</div><div class="c" style="left:597.5px;top:971px">Масло моторное 5 л</div><div class="c" style="left:1008px;width:141px;text-align:right;top:971px">1</div><div class="c" style="left:1295px;width:141px;text-align:right;top:971px">1</div><div class="c" style="left:1439px;width:162px;text-align:right;top:971px">5</div><div class="c" style="left:1777px;width:156px;text-align:right;top:971px">4</div><div class="c" style="left:1936px;width:97px;text-align:right;top:971px">46</div><div class="c" style="left:2036px;width:163px;text-align:right;top:971px">480</div><div class="c" style="left:2375px;width:113px;text-align:right;top:971px">434</div><div class="c" style="left:597.5px;top:993px">Рулевое колесо</div><div class="c" style="left:1008px;width:141px;text-align:right;top:993px">1</div><div class="c" style="left:1295px;width:141px;text-align:right;top:993px">1</div><div class="c" style="left:1439px;width:162px;text-align:right;top:993px">5</div><div class="c" style="left:1777px;width:156px;text-align:right;top:993px">4</div><div class="c" style="left:1936px;width:97px;text-align:right;top:993px">97</div><div class="c" style="left:2036px;width:163px;text-align:right;top:993px">250</div><div class="c" style="left:2375px;width:113px;text-align:right;top:993px">153</div><div class="c" style="left:552.7px;top:1016px">Отбор алкогольной продукции</div><div class="c" style="left:1008px;width:141px;text-align:right;top:1016px">4</div><div class="c" style="left:1152px;width:140px;text-align:right;top:1016px">2</div><div class="c" style="left:1295px;width:141px;text-align:right;top:1016px">6</div><div class="c" style="left:1604px;width:170px;text-align:right;top:1016px">1</div><div class="c" style="left:1777px;width:156px;text-align:right;top:1016px">294</div><div class="c" style="left:1936px;width:97px;text-align:right;top:1016px">35</div><div class="c" style="left:2202px;width:170px;text-align:right;top:1016px">10</div><div class="c" style="left:2375px;width:113px;text-align:right;top:1016px">35 965</div><div class="c" style="left:575.1px;top:1038px">Вино белое сухое «Вишневый сад» 0.75л</div><div class="c" style="left:1008px;width:141px;text-align:right;top:1038px">1</div><div class="c" style="left:1295px;width:141px;text-align:right;top:1038px">1</div><div class="c" style="left:1439px;width:162px;text-align:right;top:1038px">100</div><div class="c" style="left:1777px;width:156px;text-align:right;top:1038px">99</div><div class="c" style="left:1936px;width:97px;text-align:right;top:1038px">5</div><div class="c" style="left:2036px;width:163px;text-align:right;top:1038px">20 000</div><div class="c" style="left:2375px;width:113px;text-align:right;top:1038px">19 995</div><div class="c" style="left:575.1px;top:1061px">Виски &quot;Red&quot; 0.7л</div><div class="c" style="left:1008px;width:141px;text-align:right;top:1061px">1</div><div class="c" style="left:1152px;width:140px;text-align:right;top:1061px">1</div><div class="c" style="left:1295px;width:141px;text-align:right;top:1061px">2</div><div class="c" style="left:1439px;width:162px;text-align:right;top:1061px">100</div><div class="c" style="left:1777px;width:156px;text-align:right;top:1061px">98</div><div class="c" style="left:1936px;width:97px;text-align:right;top:1061px">5</div><div class="c" style="left:2036px;width:163px;text-align:right;top:1061px">15 000</div><div class="c" style="left:2202px;width:170px;text-align:right;top:1061px">10</div><div class="c" style="left:2375px;width:113px;text-align:right;top:1061px">14 985</div><div class="c" style="left:575.1px;top:1083px">Водка «Калинка» 0,75л</div><div class="c" style="left:1008px;width:141px;text-align:right;top:1083px">1</div><div class="c" style="left:1295px;width:141px;text-align:right;top:1083px">1</div><div class="c" style="left:1936px;width:97px;text-align:right;top:1083px">10</div><div class="c" style="left:575.1px;top:1106px">Водка «Озеро» 0,25л</div><div class="c" style="left:1008px;width:141px;text-align:right;top:1106px">1</div><div class="c" style="left:1152px;width:140px;text-align:right;top:1106px">1</div><div class="c" style="left:1295px;width:141px;text-align:right;top:1106px">2</div><div class="c" style="left:1439px;width:162px;text-align:right;top:1106px">100</div><div class="c" style="left:1604px;width:170px;text-align:right;top:1106px">1</div><div class="c" style="left:1777px;width:156px;text-align:right;top:1106px">97</div><div class="c" style="left:1936px;width:97px;text-align:right;top:1106px">15</div><div class="c" style="left:2036px;width:163px;text-align:right;top:1106px">1 000</div><div class="c" style="left:2375px;width:113px;text-align:right;top:1106px">985</div><div class="c" style="left:552.7px;top:1128px">Отбор кондитерских изделий</div><div class="c" style="left:1008px;width:141px;text-align:right;top:1128px">2</div><div class="c" style="left:1295px;width:141px;text-align:right;top:1128px">2</div><div class="c" style="left:1777px;width:156px;text-align:right;top:1128px">2</div><div class="c" style="left:1936px;width:97px;text-align:right;top:1128px">490</div><div class="c" style="left:2375px;width:113px;text-align:right;top:1128px">3 510</div><div class="c" style="left:575.1px;top:1151px">Вафли фас. 0,2</div><div class="c" style="left:1008px;width:141px;text-align:right;top:1151px">1</div><div class="c" style="left:1295px;width:141px;text-align:right;top:1151px">1</div><div class="c" style="left:1439px;width:162px;text-align:right;top:1151px">2</div><div class="c" style="left:1777px;width:156px;text-align:right;top:1151px">1</div><div class="c" style="left:1936px;width:97px;text-align:right;top:1151px">60</div><div class="c" style="left:2036px;width:163px;text-align:right;top:1151px">2 000</div><div class="c" style="left:2375px;width:113px;text-align:right;top:1151px">1 940</div><div class="c" style="left:575.1px;top:1173px">Шоколад Молочный</div><div class="c" style="left:1008px;width:141px;text-align:right;top:1173px">1</div><div class="c" style="left:1295px;width:141px;text-align:right;top:1173px">1</div><div class="c" style="left:1439px;width:162px;text-align:right;top:1173px">2</div><div class="c" style="left:1777px;width:156px;text-align:right;top:1173px">1</div><div class="c" style="left:1936px;width:97px;text-align:right;top:1173px">430</div><div class="c" style="left:2036px;width:163px;text-align:right;top:1173px">2 000</div><div class="c" style="left:2375px;width:113px;text-align:right;top:1173px">1 570</div><div class="c" style="left:552.7px;top:1196px">Отбор обуви</div><div class="c" style="left:1008px;width:141px;text-align:right;top:1196px">1</div><div class="c" style="left:1295px;width:141px;text-align:right;top:1196px">1</div><div class="c" style="left:1936px;width:97px;text-align:right;top:1196px">6</div><div class="c" style="left:575.1px;top:1218px">Ботинки на низком каблуке</div><div class="c" style="left:1008px;width:141px;text-align:right;top:1218px">1</div><div class="c" style="left:1295px;width:141px;text-align:right;top:1218px">1</div><div class="c" style="left:1936px;width:97px;text-align:right;top:1218px">6</div><div class="c" style="left:552.7px;top:1241px">Отбор техники</div><div class="c" style="left:1008px;width:141px;text-align:right;top:1241px">1</div><div class="c" style="left:1295px;width:141px;text-align:right;top:1241px">1</div><div class="c" style="left:1936px;width:97px;text-align:right;top:1241px">94</div><div class="c" style="left:575.1px;top:1263px">Печь СВЧ</div><div class="c" style="left:1008px;width:141px;text-align:right;top:1263px">1</div><div class="c" style="left:1295px;width:141px;text-align:right;top:1263px">1</div><div class="c" style="left:1936px;width:97px;text-align:right;top:1263px">94</div><div class="c" style="left:530.3px;top:1286px">Зона отбора мелкого товара (полочные стеллажи)</div><div class="c" style="left:1008px;width:141px;text-align:right;top:1286px">1</div><div class="c" style="left:1152px;width:140px;text-align:right;top:1286px">1</div><div class="c" style="left:1295px;width:141px;text-align:right;top:1286px">2</div><div class="c" style="left:1936px;width:97px;text-align:right;top:1286px">5</div><div class="c" style="left:2202px;width:170px;text-align:right;top:1286px">23</div><div class="c" style="left:2375px;width:113px;text-align:right;top:1286px">6</div><div class="c" style="left:552.7px;top:1308px">Отбор табачной продукции</div><div class="c" style="left:1008px;width:141px;text-align:right;top:1308px">1</div><div class="c" style="left:1152px;width:140px;text-align:right;top:1308px">1</div><div class="c" style="left:1295px;width:141px;text-align:right;top:1308px">2</div><div class="c" style="left:1936px;width:97px;text-align:right;top:1308px">5</div><div class="c" style="left:2202px;width:170px;text-align:right;top:1308px">13</div><div class="c" style="left:2375px;width:113px;text-align:right;top:1308px">6</div><div class="c" style="left:575.1px;top:1331px">Сигареты Крепкие HW</div><div class="c" style="left:1152px;width:140px;text-align:right;top:1331px">1</div><div class="c" style="left:1295px;width:141px;text-align:right;top:1331px">1</div><div class="c" style="left:1439px;width:162px;text-align:right;top:1331px">999</div><div class="c" style="left:1936px;width:97px;text-align:right;top:1331px">1</div><div class="c" style="left:2036px;width:163px;text-align:right;top:1331px">20</div><div class="c" style="left:2202px;width:170px;text-align:right;top:1331px">13</div><div class="c" style="left:2375px;width:113px;text-align:right;top:1331px">6</div><div class="c" style="left:575.1px;top:1353px">Сигареты Легкие</div><div class="c" style="left:1008px;width:141px;text-align:right;top:1353px">1</div><div class="c" style="left:1295px;width:141px;text-align:right;top:1353px">1</div><div class="c" style="left:1439px;width:162px;text-align:right;top:1353px">999</div><div class="c" style="left:1936px;width:97px;text-align:right;top:1353px">4</div><div class="c" style="left:552.7px;top:1376px">Отбор фармацевтики</div><div class="c" style="left:2202px;width:170px;text-align:right;top:1376px">10</div><div class="c" style="left:575.1px;top:1398px">Анальгин</div><div class="c" style="left:2202px;width:170px;text-align:right;top:1398px">10</div><div class="c" style="left:530.3px;top:1421px">Зона отбора среднего товара (коробами)</div><div class="c" style="left:1008px;width:141px;text-align:right;top:1421px">6</div><div class="c" style="left:1152px;width:140px;text-align:right;top:1421px">1</div><div class="c" style="left:1295px;width:141px;text-align:right;top:1421px">7</div><div class="c" style="left:1604px;width:170px;text-align:right;top:1421px">3</div><div class="c" style="left:1777px;width:156px;text-align:right;top:1421px">998</div><div class="c" style="left:1936px;width:97px;text-align:right;top:1421px">2 492</div><div class="c" style="left:2375px;width:113px;text-align:right;top:1421px">17 572</div><div class="tl" style="left:392px;top:488px;width:1px;height:95px"></div><div class="tl" style="left:392px;top:583px;width:89px;height:1px"></div><div class="tl" style="left:408px;top:510px;width:1px;height:73px"></div><div class="tl" style="left:408px;top:583px;width:73px;height:1px"></div><div class="tl" style="left:424px;top:533px;width:1px;height:50px"></div><div class="tl" style="left:424px;top:583px;width:57px;height:1px"></div><div class="tl" style="left:440px;top:555px;width:1px;height:28px"></div><div class="tl" style="left:440px;top:583px;width:41px;height:1px"></div><div class="tl" style="left:392px;top:600px;width:1px;height:828px"></div><div class="tl" style="left:408px;top:623px;width:1px;height:73px"></div><div class="tl" style="left:408px;top:696px;width:73px;height:1px"></div><div class="tl" style="left:424px;top:645px;width:1px;height:51px"></div><div class="tl" style="left:424px;top:696px;width:57px;height:1px"></div><div class="tl" style="left:408px;top:713px;width:1px;height:715px"></div><div class="tl" style="left:424px;top:735px;width:1px;height:546px"></div><div class="tl" style="left:424px;top:1281px;width:57px;height:1px"></div><div class="tl" style="left:440px;top:758px;width:1px;height:73px"></div><div class="tl" style="left:440px;top:831px;width:41px;height:1px"></div><div class="tl" style="left:440px;top:848px;width:1px;height:163px"></div><div class="tl" style="left:440px;top:1011px;width:41px;height:1px"></div><div class="tl" style="left:456px;top:870px;width:1px;height:51px"></div><div class="tl" style="left:456px;top:921px;width:25px;height:1px"></div><div class="tl" style="left:456px;top:938px;width:1px;height:73px"></div><div class="tl" style="left:456px;top:1011px;width:25px;height:1px"></div><div class="tl" style="left:440px;top:1028px;width:1px;height:95px"></div><div class="tl" style="left:440px;top:1123px;width:41px;height:1px"></div><div class="tl" style="left:440px;top:1140px;width:1px;height:51px"></div><div class="tl" style="left:440px;top:1191px;width:41px;height:1px"></div><div class="tl" style="left:440px;top:1208px;width:1px;height:28px"></div><div class="tl" style="left:440px;top:1236px;width:41px;height:1px"></div><div class="tl" style="left:440px;top:1253px;width:1px;height:28px"></div><div class="tl" style="left:440px;top:1281px;width:41px;height:1px"></div><div class="tl" style="left:424px;top:1298px;width:1px;height:118px"></div><div class="tl" style="left:424px;top:1416px;width:57px;height:1px"></div><div class="tl" style="left:440px;top:1320px;width:1px;height:51px"></div><div class="tl" style="left:440px;top:1371px;width:41px;height:1px"></div><div class="tl" style="left:440px;top:1388px;width:1px;height:28px"></div><div class="tl" style="left:440px;top:1416px;width:41px;height:1px"></div><div class="tl" style="left:424px;top:1433px;width:1px;height:-5px"></div><div class="box" style="left:386px;top:476px"></div><div class="box" style="left:402px;top:498px"></div><div class="box" style="left:418px;top:521px"></div><div class="box" style="left:434px;top:543px"></div><div class="box" style="left:386px;top:588px"></div><div class="box" style="left:402px;top:611px"></div><div class="box" style="left:418px;top:633px"></div><div class="box" style="left:402px;top:701px"></div><div class="box" style="left:418px;top:723px"></div><div class="box" style="left:434px;top:746px"></div><div class="box" style="left:434px;top:836px"></div><div class="box" style="left:450px;top:858px"></div><div class="box" style="left:450px;top:926px"></div><div class="box" style="left:434px;top:1016px"></div><div class="box" style="left:434px;top:1128px"></div><div class="box" style="left:434px;top:1196px"></div><div class="box" style="left:434px;top:1241px"></div><div class="box" style="left:418px;top:1286px"></div><div class="box" style="left:434px;top:1308px"></div><div class="box" style="left:434px;top:1376px"></div><div class="box" style="left:418px;top:1421px"></div></body></html>
